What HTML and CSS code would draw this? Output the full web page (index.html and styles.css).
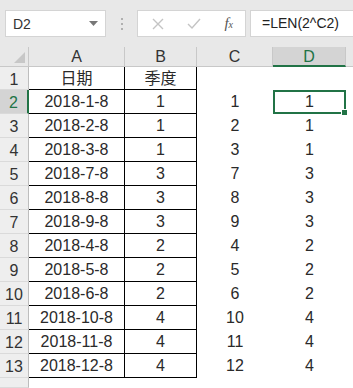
FILE: index.html
```html
<!DOCTYPE html>
<html lang="zh">
<head>
    <meta charset="UTF-8">
    <title>Sheet</title>
    <link rel="stylesheet" href="styles.css">
</head>
<body>
<div class="toolbar">
    <div class="namebox">
        <span>D2</span>
        <svg class="caret" width="9" height="5" viewBox="0 0 9 5"><path d="M0 0H9L4.5 5Z" fill="#777"/></svg>
    </div>
    <div class="grip">
        <i></i><i></i><i></i>
    </div>
    <div class="fxbox">
        <svg width="12" height="12" viewBox="0 0 12 12"><path d="M1 1L11 11M11 1L1 11" stroke="#c4c4c4" stroke-width="1.4" fill="none"/></svg>
        <svg width="14" height="12" viewBox="0 0 14 12"><path d="M1 6L5 10L13 1" stroke="#c4c4c4" stroke-width="1.4" fill="none"/></svg>
        <span class="fx">f<sub>x</sub></span>
    </div>
    <div class="formula">=LEN(2^C2)</div>
</div>

<div class="sheet">
    <div class="corner"><svg width="11" height="11" viewBox="0 0 11 11"><path d="M11 0V11H0Z" fill="#c7c7c7"/></svg></div>
    <div class="col">A</div>
    <div class="col">B</div>
    <div class="col">C</div>
    <div class="col active">D</div>
    <div class="col last"></div>

    <div class="rh">1</div><div class="c a">日期</div><div class="c b">季度</div><div class="c"></div><div class="c"></div><div class="c"></div>
    <div class="rh active">2</div><div class="c a">2018-1-8</div><div class="c b">1</div><div class="c">1</div><div class="c sel">1</div><div class="c"></div>
    <div class="rh">3</div><div class="c a">2018-2-8</div><div class="c b">1</div><div class="c">2</div><div class="c">1</div><div class="c"></div>
    <div class="rh">4</div><div class="c a">2018-3-8</div><div class="c b">1</div><div class="c">3</div><div class="c">1</div><div class="c"></div>
    <div class="rh">5</div><div class="c a">2018-7-8</div><div class="c b">3</div><div class="c">7</div><div class="c">3</div><div class="c"></div>
    <div class="rh">6</div><div class="c a">2018-8-8</div><div class="c b">3</div><div class="c">8</div><div class="c">3</div><div class="c"></div>
    <div class="rh">7</div><div class="c a">2018-9-8</div><div class="c b">3</div><div class="c">9</div><div class="c">3</div><div class="c"></div>
    <div class="rh">8</div><div class="c a">2018-4-8</div><div class="c b">2</div><div class="c">4</div><div class="c">2</div><div class="c"></div>
    <div class="rh">9</div><div class="c a">2018-5-8</div><div class="c b">2</div><div class="c">5</div><div class="c">2</div><div class="c"></div>
    <div class="rh">10</div><div class="c a">2018-6-8</div><div class="c b">2</div><div class="c">6</div><div class="c">2</div><div class="c"></div>
    <div class="rh">11</div><div class="c a">2018-10-8</div><div class="c b">4</div><div class="c">10</div><div class="c">4</div><div class="c"></div>
    <div class="rh">12</div><div class="c a">2018-11-8</div><div class="c b">4</div><div class="c">11</div><div class="c">4</div><div class="c"></div>
    <div class="rh">13</div><div class="c a">2018-12-8</div><div class="c b">4</div><div class="c">12</div><div class="c">4</div><div class="c"></div>
    <div class="rh"></div><div class="c"></div><div class="c"></div><div class="c"></div><div class="c"></div><div class="c"></div>
</div>
</body>
</html>
```

FILE: styles.css
```css
* {
    box-sizing: border-box;
}
body {
    margin: 0;
    width: 353px;
    height: 388px;
    overflow: hidden;
    background-color: #fff;
    font-family: "Liberation Sans", "Noto Sans CJK SC", sans-serif;
    color: #2a2a2a;
}
.toolbar {
    display: flex;
    align-items: center;
    height: 47px;
    padding: 10px 0 10px 5px;
    background-color: #e8e8e8;
}
.namebox {
    display: flex;
    align-items: center;
    justify-content: space-between;
    width: 101px;
    height: 27px;
    padding: 0 7px 0 7px;
    background-color: #fff;
    border: 1px solid #d4d4d4;
    font-size: 14px;
    color: #333;
}
.grip {
    display: flex;
    flex-direction: column;
    gap: 3px;
    width: 31px;
    align-items: center;
}
.grip i {
    display: block;
    width: 2px;
    height: 2px;
    background-color: #b0b0b0;
}
.fxbox {
    display: flex;
    align-items: center;
    justify-content: space-between;
    width: 109px;
    height: 27px;
    padding: 0 12px 0 14px;
    background-color: #fff;
    border: 1px solid #d4d4d4;
}
.fx {
    font-family: "Liberation Serif", serif;
    font-style: italic;
    font-size: 15px;
    color: #555;
}
.fx sub {
    font-size: 10px;
    vertical-align: 0;
}
.formula {
    flex: 1;
    height: 27px;
    margin-left: 4px;
    padding: 4px 0 0 11px;
    background-color: #fff;
    border: 1px solid #d4d4d4;
    border-right: none;
    font-size: 14px;
    color: #222;
}
.sheet {
    display: grid;
    grid-template-columns: 29px 96px 72px 76px 73px 7px;
    grid-template-rows: 20px 23px repeat(12, 24px) 10px;
}
.corner {
    display: flex;
    align-items: flex-end;
    justify-content: flex-end;
    padding: 0 3px 3px 0;
    background-color: #e8e8e8;
    border-right: 1px solid #c8c8c8;
    border-bottom: 1px solid #c8c8c8;
}
.col {
    background-color: #e8e8e8;
    border-right: 1px solid #c8c8c8;
    border-bottom: 1px solid #c8c8c8;
    text-align: center;
    font-size: 16px;
    line-height: 20px;
    color: #333;
}
.col.active {
    background-color: #d4d4d4;
    border-bottom: 2px solid #217346;
    color: #217346;
}
.col.last {
    border-right: none;
}
.rh {
    background-color: #eeeeee;
    border-right: 1px solid #bdbdbd;
    border-bottom: 1px solid #dadada;
    text-align: center;
    font-size: 16px;
    line-height: 25px;
    color: #333;
}
.rh.active {
    background-color: #d4d4d4;
    border-right: 2px solid #217346;
    color: #217346;
}
.c {
    position: relative;
    text-align: center;
    font-size: 16px;
    line-height: 24px;
    white-space: nowrap;
}
.c.a,
.c.b {
    border-right: 1px solid #000;
    border-bottom: 1px solid #000;
}
.c.sel {
    border: 2px solid #217346;
    line-height: 20px;
}
.c.sel::after {
    content: "";
    position: absolute;
    right: -4px;
    bottom: -4px;
    width: 5px;
    height: 5px;
    background-color: #217346;
    border: 1px solid #fff;
}
```
